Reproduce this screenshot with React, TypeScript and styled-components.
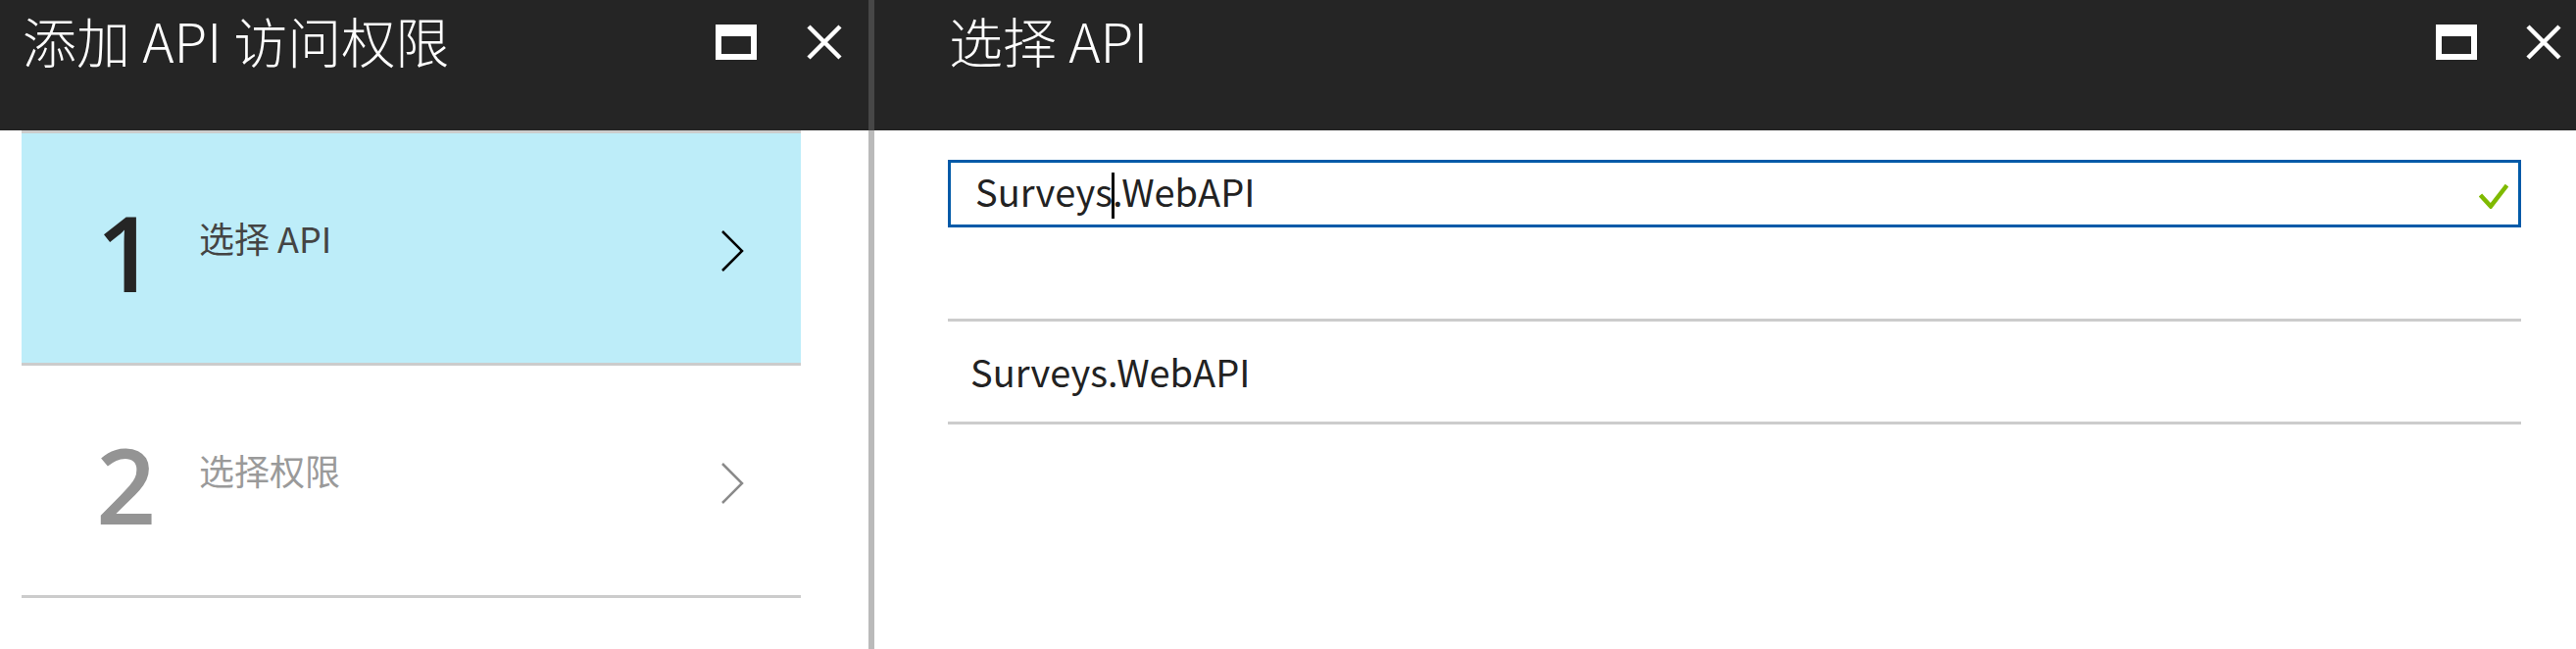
import React from "react";
import styled, { createGlobalStyle } from "styled-components";

const GlobalStyle = createGlobalStyle`
  html, body {
    margin: 0;
    padding: 0;
    background: #ffffff;
  }
  body {
    font-family: "Noto Sans CJK SC", "Noto Sans", sans-serif;
  }
  #root {
    height: 100vh;
  }
`;

const Page = styled.div`
  display: grid;
  grid-template-columns: 892px 1fr;
  height: 662px;
  overflow: hidden;
`;

const Panel = styled.section`
  display: flex;
  flex-direction: column;
  min-width: 0;
`;

const Header = styled.header<{ $divider?: boolean; $padL: number; $padR: number }>`
  box-sizing: border-box;
  height: 133px;
  background: #252525;
  display: flex;
  align-items: flex-start;
  padding: 13px ${(p) => p.$padR}px 0 ${(p) => p.$padL}px;
  border-right: ${(p) => (p.$divider ? "6px solid #474747" : "none")};
`;

const Title = styled.h1`
  margin: 0;
  flex: 1;
  font-family: "Noto Sans CJK SC", "Noto Sans", sans-serif;
  font-size: 55px;
  font-weight: 300;
  line-height: 1;
  color: #ffffff;
  white-space: nowrap;
`;

const IconGroup = styled.div<{ $gap: number }>`
  display: flex;
  align-items: flex-start;
  gap: ${(p) => p.$gap}px;
  margin-top: 12px;
`;

const MaximizeIcon = styled.span`
  display: block;
  box-sizing: border-box;
  width: 42px;
  height: 36px;
  border: 6px solid #ffffff;
  border-top-width: 12px;
`;

const CloseSvg = styled.svg`
  display: block;
  width: 36px;
  height: 36px;
`;

const Body = styled.div<{ $divider?: boolean; $pad: string }>`
  flex: 1;
  padding: ${(p) => p.$pad};
  border-right: ${(p) => (p.$divider ? "6px solid #bababa" : "none")};
`;

const StepList = styled.div`
  margin: 0 69px 0 22px;
  border-top: 3px solid #cccccc;
`;

const StepItem = styled.div<{ $active?: boolean }>`
  height: 234px;
  box-sizing: content-box;
  display: flex;
  align-items: flex-start;
  padding: 0 58px 0 76px;
  background: ${(p) => (p.$active ? "#bdedf9" : "#ffffff")};
  border-bottom: 3px solid #cccccc;
`;

const StepNumber = styled.div<{ $active?: boolean }>`
  width: 105px;
  margin-top: 67px;
  font-family: "Open Sans", "Liberation Sans", sans-serif;
  font-weight: 600;
  font-size: 107px;
  line-height: 1;
  color: ${(p) => (p.$active ? "#252525" : "#949494")};
`;

const StepLabel = styled.div<{ $active?: boolean }>`
  flex: 1;
  margin-top: 88px;
  font-size: 36px;
  line-height: 1;
  color: ${(p) => (p.$active ? "#444444" : "#9a9a9a")};
  white-space: nowrap;
`;

const ChevronSvg = styled.svg`
  display: block;
  width: 24px;
  height: 44px;
  margin-top: 98px;
`;

const SearchBox = styled.div`
  box-sizing: border-box;
  height: 69px;
  border: 3px solid #005aa8;
  display: flex;
  align-items: center;
  padding: 0 10px 0 25px;
`;

const SearchText = styled.div`
  margin-top: 6px;
  font-size: 38px;
  line-height: 1;
  color: #222222;
  white-space: nowrap;
`;

const Caret = styled.span`
  display: inline-block;
  width: 3px;
  height: 47px;
  background: #000000;
  vertical-align: middle;
  margin: 0 -2px 0 -1px;
  position: relative;
  top: -2px;
`;

const CheckSvg = styled.svg`
  display: block;
  width: 30px;
  height: 26px;
  margin-left: auto;
  margin-top: 4px;
`;

const ResultList = styled.div`
  margin-top: 93px;
  border-top: 3px solid #cccccc;
`;

const ResultRow = styled.div`
  height: 105px;
  box-sizing: border-box;
  display: flex;
  align-items: center;
  padding-left: 23px;
  border-bottom: 3px solid #cccccc;
  font-size: 38px;
  line-height: 1;
  color: #222222;
`;

const CloseIcon = () => (
  <CloseSvg viewBox="0 0 36 36">
    <path d="M2 2 L34 34 M34 2 L2 34" stroke="#ffffff" strokeWidth="4.5" fill="none" />
  </CloseSvg>
);

const Chevron = ({ color }: { color: string }) => (
  <ChevronSvg viewBox="0 0 24 44">
    <polyline points="2,2 22,22 2,42" stroke={color} strokeWidth="2.5" fill="none" />
  </ChevronSvg>
);

const steps = [
  { n: "1", label: "选择 API", active: true },
  { n: "2", label: "选择权限", active: false },
];

export default function App() {
  return (
    <>
      <GlobalStyle />
      <Page>
        <Panel>
          <Header $divider $padL={23} $padR={27}>
            <Title>添加 API 访问权限</Title>
            <IconGroup $gap={51}>
              <MaximizeIcon />
              <CloseIcon />
            </IconGroup>
          </Header>
          <Body $divider $pad="0">
            <StepList>
              {steps.map((s) => (
                <StepItem key={s.n} $active={s.active}>
                  <StepNumber $active={s.active}>{s.n}</StepNumber>
                  <StepLabel $active={s.active}>{s.label}</StepLabel>
                  <Chevron color={s.active ? "#000000" : "#8a8a8a"} />
                </StepItem>
              ))}
            </StepList>
          </Body>
        </Panel>
        <Panel>
          <Header $padL={76} $padR={15}>
            <Title>选择 API</Title>
            <IconGroup $gap={50}>
              <MaximizeIcon />
              <CloseIcon />
            </IconGroup>
          </Header>
          <Body $pad="30px 56px 0 75px">
            <SearchBox>
              <SearchText>
                Surveys<Caret />.WebAPI
              </SearchText>
              <CheckSvg viewBox="0 0 30 26">
                <polyline points="1.5,12 12,23.5 28.5,2" stroke="#7fba00" strokeWidth="4.5" fill="none" />
              </CheckSvg>
            </SearchBox>
            <ResultList>
              <ResultRow>Surveys.WebAPI</ResultRow>
            </ResultList>
          </Body>
        </Panel>
      </Page>
    </>
  );
}
